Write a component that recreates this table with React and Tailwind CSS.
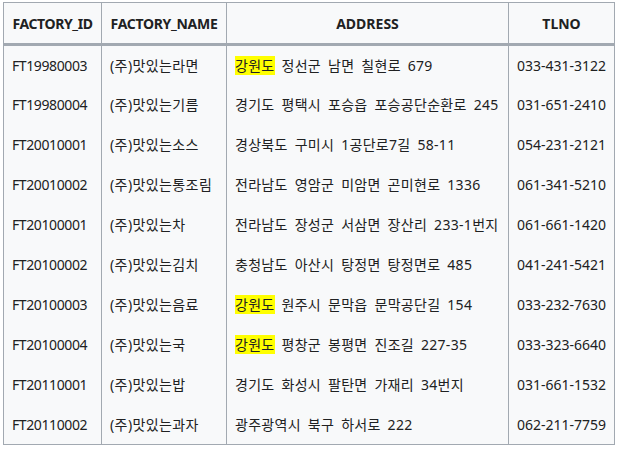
import React from 'react'

const rows = [
  ['FT19980003', '(주)맛있는라면', '강원도', ' 정선군 남면 칠현로 679', '033-431-3122'],
  ['FT19980004', '(주)맛있는기름', '', '경기도 평택시 포승읍 포승공단순환로 245', '031-651-2410'],
  ['FT20010001', '(주)맛있는소스', '', '경상북도 구미시 1공단로7길 58-11', '054-231-2121'],
  ['FT20010002', '(주)맛있는통조림', '', '전라남도 영암군 미암면 곤미현로 1336', '061-341-5210'],
  ['FT20100001', '(주)맛있는차', '', '전라남도 장성군 서삼면 장산리 233-1번지', '061-661-1420'],
  ['FT20100002', '(주)맛있는김치', '', '충청남도 아산시 탕정면 탕정면로 485', '041-241-5421'],
  ['FT20100003', '(주)맛있는음료', '강원도', ' 원주시 문막읍 문막공단길 154', '033-232-7630'],
  ['FT20100004', '(주)맛있는국', '강원도', ' 평창군 봉평면 진조길 227-35', '033-323-6640'],
  ['FT20110001', '(주)맛있는밥', '', '경기도 화성시 팔탄면 가재리 34번지', '031-661-1532'],
  ['FT20110002', '(주)맛있는과자', '', '광주광역시 북구 하서로 222', '062-211-7759'],
]

export default function App() {
  return (
    <div className="bg-white pt-[2px] pl-[3px] font-['Noto_Sans','Noto_Sans_CJK_KR',sans-serif] text-[14px] text-[#202122]">
      <table className="table-fixed border-collapse border border-[#a2a9b1] bg-[#f8f9fa] w-[611px]">
        <colgroup>
          <col className="w-[98px]" />
          <col className="w-[125px]" />
          <col className="w-[282px]" />
          <col className="w-[106px]" />
        </colgroup>
        <thead>
          <tr className="h-[42px] border-b-[3px] border-[#a2a9b1]">
            <th className="border-x border-[#a2a9b1] font-bold tracking-[-0.4px] text-center px-1">FACTORY_ID</th>
            <th className="border-x border-[#a2a9b1] font-bold tracking-[-0.3px] text-center px-1">FACTORY_NAME</th>
            <th className="border-x border-[#a2a9b1] font-bold text-center px-2">ADDRESS</th>
            <th className="border-x border-[#a2a9b1] font-bold text-center px-2">TLNO</th>
          </tr>
        </thead>
        <tbody>
          {rows.map((r) => (
            <tr key={r[0]} className="h-[40px]">
              <td className="border-x border-[#a2a9b1] px-2 tracking-[-0.4px] whitespace-nowrap">{r[0]}</td>
              <td className="border-x border-[#a2a9b1] px-2 tracking-[0.4px] whitespace-nowrap">{r[1]}</td>
              <td className="border-x border-[#a2a9b1] px-2 tracking-[0.3px] [word-spacing:3px] whitespace-nowrap">
                {r[2] && <span className="bg-[#ffff00]">{r[2]}</span>}
                {r[3]}
              </td>
              <td className="border-x border-[#a2a9b1] px-2 whitespace-nowrap">{r[4]}</td>
            </tr>
          ))}
        </tbody>
      </table>
    </div>
  )
}
